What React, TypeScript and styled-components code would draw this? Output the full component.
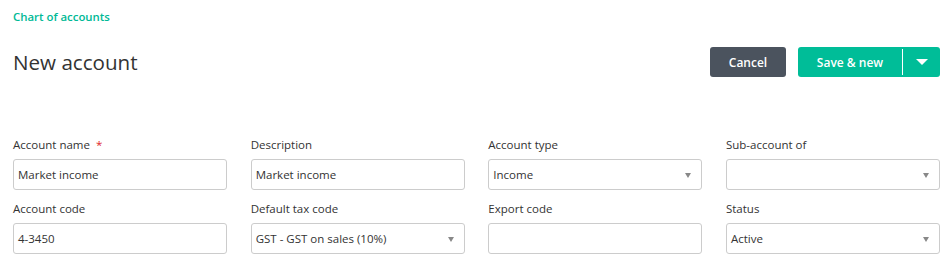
import React from "react";
import styled, { createGlobalStyle } from "styled-components";

const GlobalStyle = createGlobalStyle`
  body {
    margin: 0;
    background: #ffffff;
    font-family: "Open Sans", "Liberation Sans", sans-serif;
    color: #333333;
  }
`;

type Field = {
  label: string;
  value: string;
  select?: boolean;
  required?: boolean;
};

const fields: Field[] = [
  { label: "Account name", value: "Market income", required: true },
  { label: "Description", value: "Market income" },
  { label: "Account type", value: "Income", select: true },
  { label: "Sub-account of", value: "", select: true },
  { label: "Account code", value: "4-3450" },
  { label: "Default tax code", value: "GST - GST on sales (10%)", select: true },
  { label: "Export code", value: "" },
  { label: "Status", value: "Active", select: true },
];

const App = () => {
  return (
    <Page>
      <GlobalStyle />
      <Breadcrumb>Chart of accounts</Breadcrumb>
      <Header>
        <Title>New account</Title>
        <Actions>
          <CancelButton>Cancel</CancelButton>
          <SplitButton>
            <SaveButton>Save &amp; new</SaveButton>
            <Divider />
            <ToggleButton>
              <Caret />
            </ToggleButton>
          </SplitButton>
        </Actions>
      </Header>
      <FormGrid>
        {fields.map((f) => (
          <FieldBox key={f.label}>
            <Label>
              {f.label}
              {f.required && <Required>*</Required>}
            </Label>
            <InputBox>
              <InputText>{f.value}</InputText>
              {f.select && <SelectArrow />}
            </InputBox>
          </FieldBox>
        ))}
      </FormGrid>
    </Page>
  );
};

export default App;

const Page = styled.div`
  width: 947px;
  height: 262px;
  box-sizing: border-box;
  padding: 8px 7px 0 13px;
  overflow: hidden;
`;

const Breadcrumb = styled.a`
  display: block;
  font-size: 11.4px;
  font-weight: 600;
  line-height: 18px;
  color: #00b996;
  text-decoration: none;
`;

const Header = styled.div`
  display: flex;
  justify-content: space-between;
  align-items: center;
  margin-top: 21px;
  height: 30px;
`;

const Title = styled.h1`
  margin: 0;
  font-size: 20.6px;
  font-weight: 400;
  color: #333333;
  line-height: 30px;
`;

const Actions = styled.div`
  display: flex;
  gap: 12px;
`;

const CancelButton = styled.button`
  width: 76px;
  height: 30px;
  border: none;
  border-radius: 3px;
  background: #4b535e;
  color: #ffffff;
  font-family: inherit;
  font-size: 12px;
  font-weight: 600;
  padding: 0;
`;

const SplitButton = styled.div`
  display: flex;
  height: 30px;
  border-radius: 3px;
  overflow: hidden;
  background: #00bd98;
`;

const SaveButton = styled.button`
  width: 104px;
  border: none;
  background: transparent;
  color: #ffffff;
  font-family: inherit;
  font-size: 12px;
  font-weight: 600;
  padding: 0;
`;

const Divider = styled.div`
  width: 1px;
  background: #ffffff;
  margin: 2px 0;
`;

const ToggleButton = styled.button`
  width: 37px;
  border: none;
  background: transparent;
  display: flex;
  align-items: center;
  justify-content: center;
  padding: 0;
`;

const Caret = styled.span`
  width: 0;
  height: 0;
  border-left: 6px solid transparent;
  border-right: 6px solid transparent;
  border-top: 6px solid #ffffff;
`;

const FormGrid = styled.div`
  display: grid;
  grid-template-columns: repeat(4, 214px);
  column-gap: 23.67px;
  row-gap: 11px;
  margin-top: 60px;
`;

const FieldBox = styled.div`
  display: flex;
  flex-direction: column;
`;

const Label = styled.label`
  font-size: 11.5px;
  line-height: 16px;
  color: #333333;
  margin-bottom: 6px;
`;

const Required = styled.span`
  color: #e0262a;
  margin-left: 6px;
`;

const InputBox = styled.div`
  position: relative;
  height: 31px;
  box-sizing: border-box;
  border: 1px solid #cccccc;
  border-radius: 3px;
  display: flex;
  align-items: center;
  padding: 0 4px;
`;

const InputText = styled.span`
  font-size: 11.5px;
  color: #333333;
`;

const SelectArrow = styled.span`
  position: absolute;
  right: 10px;
  top: 50%;
  margin-top: -2px;
  width: 0;
  height: 0;
  border-left: 3.5px solid transparent;
  border-right: 3.5px solid transparent;
  border-top: 5px solid #888888;
`;
